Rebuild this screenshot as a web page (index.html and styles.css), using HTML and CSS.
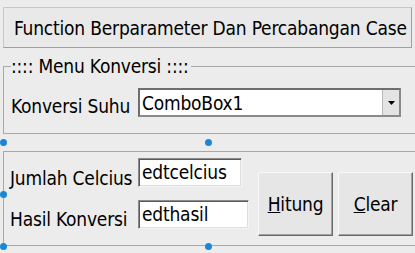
FILE: index.html
```html
<!DOCTYPE html>
<html>
<head>
<meta charset="utf-8">
<link rel="stylesheet" href="styles.css">
</head>
<body>
<div class="form">
  <div class="title-panel">Function Berparameter Dan Percabangan Case</div>
  <fieldset class="group">
    <legend class="group-caption">:::: Menu Konversi ::::</legend>
    <div class="group-row">
      <span class="label label-suhu">Konversi Suhu</span>
      <div class="combo">
        <span class="combo-text">ComboBox1</span>
        <span class="combo-btn">
          <svg width="7" height="4" viewBox="0 0 7 4"><path d="M0 0H7L3.5 4Z" fill="#000"/></svg>
        </span>
      </div>
    </div>
  </fieldset>
  <div class="panel">
    <div class="fields">
      <div class="field-row">
        <span class="label label-celcius">Jumlah Celcius</span>
        <div class="edit edit-celcius">edtcelcius</div>
      </div>
      <div class="field-row">
        <span class="label label-hasil">Hasil Konversi</span>
        <div class="edit edit-hasil">edthasil</div>
      </div>
    </div>
    <button class="btn btn-hitung"><u>H</u>itung</button>
    <button class="btn btn-clear"><u>C</u>lear</button>
  </div>
  <span class="handle h1"></span>
  <span class="handle h2"></span>
  <span class="handle h3"></span>
  <span class="handle h4"></span>
  <span class="handle h5"></span>
</div>
</body>
</html>
```
FILE: styles.css
```css
html, body {
  margin: 0;
  padding: 0;
  background: #ececec;
  overflow: hidden;
}
body {
  font-family: "DejaVu Sans Condensed", "DejaVu Sans", sans-serif;
  font-size: 19px;
  letter-spacing: -0.2px;
  line-height: 22px;
  color: #000;
}
.form {
  position: relative;
  width: 415px;
  height: 253px;
  padding-top: 7px;
  box-sizing: border-box;
}
.title-panel {
  margin-left: 3px;
  width: 409px;
  height: 41px;
  box-sizing: border-box;
  border: 1px solid;
  border-color: #c8c8c8 #a0a0a0 #a0a0a0 #c8c8c8;
  background: #e9e9e9;
  padding: 9px 0 0 10px;
  white-space: nowrap;
}
.group {
  margin: 7px 0 0 3px;
  width: 420px;
  box-sizing: border-box;
  padding: 11px 0 16px 7px;
  border: 1px solid #a8a8a8;
  min-width: 0;
}
.group-caption {
  margin-left: 0;
  padding: 0 2px 0 0;
}
.group-row {
  display: flex;
  align-items: flex-start;
}
.label {
  white-space: nowrap;
}
.label-suhu {
  width: 127px;
  margin-top: 7px;
}
.combo {
  width: 263px;
  height: 29px;
  box-sizing: border-box;
  border: 2px solid;
  border-color: #6e6e6e #8a8a8a #8a8a8a #6e6e6e;
  background: #fff;
  display: flex;
  align-items: stretch;
}
.combo-text {
  flex: 1;
  padding: 2px 0 0 2px;
}
.combo-btn {
  width: 16px;
  background: #e4e4e4;
  border-left: 1px solid #b8b8b8;
  display: flex;
  align-items: center;
  justify-content: center;
}
.panel {
  margin: 17px 0 0 3px;
  width: 420px;
  height: 95px;
  box-sizing: border-box;
  border: 1px solid #a8a8a8;
  display: flex;
  align-items: flex-start;
  padding: 6px 0 0 6px;
}
.fields {
  display: flex;
  flex-direction: column;
  gap: 11px;
  width: 239px;
}
.field-row {
  display: flex;
  align-items: flex-start;
}
.field-row .label {
  width: 128px;
}
.label-celcius { margin-top: 9px; }
.label-hasil { margin-top: 8px; }
.edit {
  height: 29px;
  box-sizing: border-box;
  border: 1px solid;
  border-color: #8a8a8a #f4f4f4 #f4f4f4 #8a8a8a;
  box-shadow: inset 1px 1px 0 #5a5a5a, inset -1px -1px 0 #dedede;
  background: #fff;
  padding: 2px 0 0 3px;
}
.edit-celcius { width: 104px; }
.edit-hasil { width: 111px; }
.btn {
  margin-top: 14px;
  height: 64px;
  box-sizing: border-box;
  font: inherit;
  letter-spacing: inherit;
  color: #000;
  background: #e6e6e6;
  border: 1px solid;
  border-color: #f8f8f8 #6a6a6a #6a6a6a #f8f8f8;
  box-shadow: inset -1px -1px 0 #a0a0a0;
  padding: 0;
}
.btn-hitung {
  width: 75px;
  margin-left: 9px;
}
.btn-clear {
  width: 75px;
  margin-left: 5px;
}
.handle {
  position: absolute;
  width: 7px;
  height: 7px;
  border-radius: 50%;
  background: #1a86d8;
}
.h1 { left: 0; top: 139px; }
.h2 { left: 205px; top: 139px; }
.h3 { left: 0; top: 191px; }
.h4 { left: 0; top: 243px; }
.h5 { left: 205px; top: 243px; }
```
